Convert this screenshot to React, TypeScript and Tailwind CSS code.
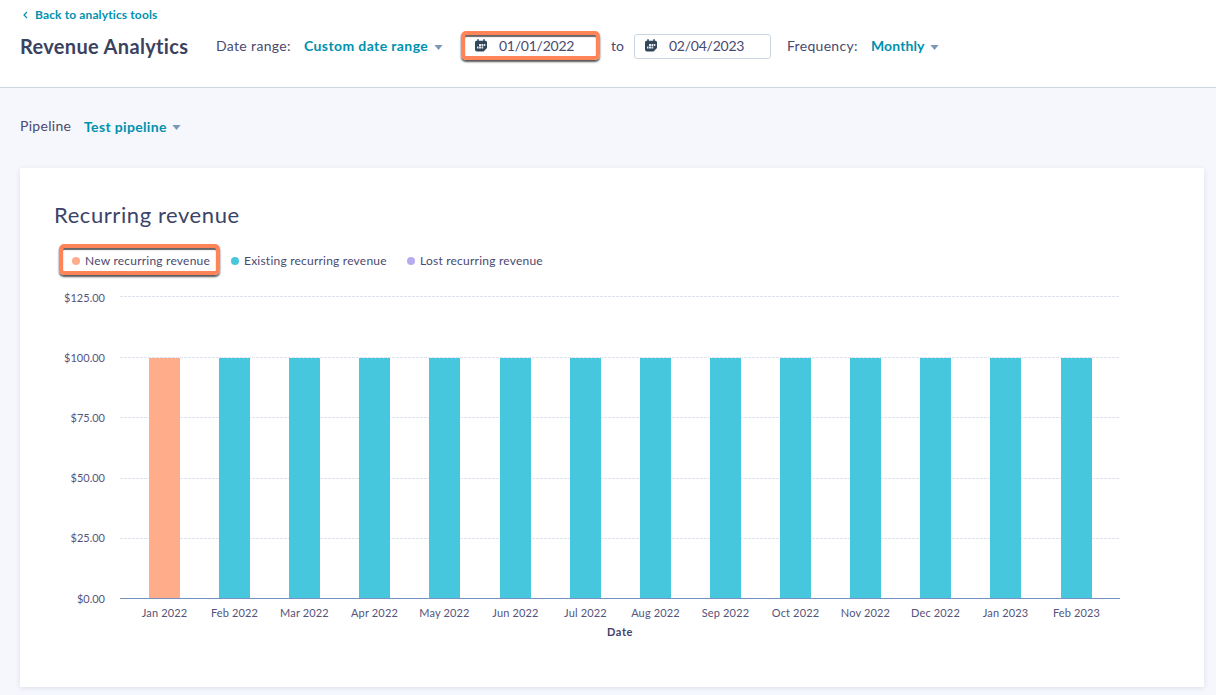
import React from 'react';

const months = [
  'Jan 2022', 'Feb 2022', 'Mar 2022', 'Apr 2022', 'May 2022', 'Jun 2022', 'Jul 2022',
  'Aug 2022', 'Sep 2022', 'Oct 2022', 'Nov 2022', 'Dec 2022', 'Jan 2023', 'Feb 2023',
];

const ticks = [
  { label: '$125.00', y: 6, textY: 11.5 },
  { label: '$100.00', y: 67, textY: 71.8 },
  { label: '$75.00', y: 127, textY: 131.8 },
  { label: '$50.00', y: 188, textY: 192 },
  { label: '$25.00', y: 248, textY: 252 },
  { label: '$0.00', y: 308, textY: 312.8 },
];

const CalendarIcon = () => (
  <svg width="12" height="13" viewBox="0 0 12 13" className="relative -top-px shrink-0">
    <path d="M1.5 1.8h9A1.5 1.5 0 0 1 12 3.3V9l-3.4 3.6H2A2 2 0 0 1 0 10.6V3.3a1.5 1.5 0 0 1 1.5-1.5z" fill="#33475b" />
    <path d="M3 0.3v3M9 0.3v3" stroke="#33475b" strokeWidth="1.6" />
    <path d="M4 5h2v2H4zM6.5 5h1.7v2H6.5zM8.8 5h1.5v2H8.8zM2 7.6h1.5v2H2zM4 7.6h2v2H4zM6.5 7.6h1.7v2H6.5z" fill="#e6ebf2" />
  </svg>
);

const Caret = () => (
  <svg width="9" height="5" viewBox="0 0 9 5" className="relative top-px shrink-0">
    <path d="M0.4 0h8.2L4.5 5z" fill="#7c98b6" />
  </svg>
);

const DateInput = ({ value, className = 'pl-2.5' }: { value: string; className?: string }) => (
  <div className={`flex h-[25px] w-[137px] items-center rounded-[3px] border border-[#cbd6e2] bg-white ${className}`}>
    <CalendarIcon />
    <span className="ml-3 whitespace-nowrap pb-[3px] text-[14px] tracking-[-0.25px]">{value}</span>
  </div>
);

const highlight = 'rounded-[5px] border-4 border-[#ff8559] shadow-[0_2px_2px_#555,inset_0_2px_1px_#666]';

const Chart = () => (
  <svg width="1120" height="350" viewBox="0 0 1120 350" className="block" fill="#55537a" fontSize="11">
    {ticks.map((tick, i) => (
      <g key={tick.label}>
        <text x="85" y={tick.textY} textAnchor="end">{tick.label}</text>
        {i < 5 && (
          <path d={`M100 ${tick.y + 0.5}H1100`} stroke="#dfe3ee" strokeDasharray="3 1" />
        )}
      </g>
    ))}
    {months.map((month, i) => {
      const x = Math.floor(129.45 + i * 70.12);
      return (
        <g key={month}>
          <rect x={x} y="68" width="31" height="240" fill={i === 0 ? '#ffac8b' : '#47c7de'} />
          <text x={x + 15.5} y="327" textAnchor="middle" letterSpacing="0.15">{month}</text>
        </g>
      );
    })}
    <path d="M100 308.5H1100" stroke="#7394c0" />
    <text x="600" y="346" textAnchor="middle" fontWeight="700" letterSpacing="0.6" fill="#42426a">Date</text>
  </svg>
);

const App = () => {
  return (
    <div className="h-[695px] overflow-hidden bg-[#f5f7fc] font-['Lato',sans-serif] text-[#4a4970]">
      <header className="h-[88px] border-b border-[#cbd6e2] bg-white px-5">
        <a className="flex h-[30px] items-center whitespace-nowrap pl-[3px] text-[12px] font-bold tracking-[0.13px] text-[#0091ae]">
          <svg width="5" height="8" viewBox="0 0 5 8" fill="none" className="mr-[7px]">
            <path d="M4 1L1 4l3 3" stroke="#0091ae" strokeWidth="1.2" />
          </svg>
          Back to analytics tools
        </a>
        <div className="flex h-[33px] items-center whitespace-nowrap text-[14px]">
          <h1 className="w-[196px] pb-0.5 text-[20px] font-bold tracking-[0.33px] text-[#3b4260]">Revenue Analytics</h1>
          <span className="w-[88px] pb-0.5 tracking-[0.35px]">Date range:</span>
          <span className="w-[130px] pb-0.5 font-bold tracking-[0.4px] text-[#0091ae]">Custom date range</span>
          <Caret />
          <div className="relative ml-[19px]">
            <DateInput value="01/01/2022" className="pl-3" />
            <div className={`absolute -left-px -top-[3px] h-[29px] w-[139px] ${highlight}`} />
          </div>
          <span className="ml-[12px] w-[23px] pb-0.5 tracking-[0.1px]">to</span>
          <DateInput value="02/04/2023" />
          <span className="ml-4 w-[84px] pb-0.5 tracking-[0.3px]">Frequency:</span>
          <span className="w-[59px] pb-0.5 font-bold tracking-[0.1px] text-[#0091ae]">Monthly</span>
          <Caret />
        </div>
      </header>

      <div className="flex h-[80px] items-center whitespace-nowrap px-5 pb-[3px] text-[14px]">
        <span className="w-[64px] pb-0.5 tracking-[0.3px]">Pipeline</span>
        <span className="w-[88px] font-bold tracking-[0.35px] text-[#0091ae]">Test pipeline</span>
        <Caret />
      </div>

      <main className="ml-5 h-[519px] w-[1184px] bg-white pt-[33px] shadow-[0_1px_5px_rgba(45,62,80,0.12)]">
        <h2 className="pl-[34px] text-[22px] leading-7 tracking-[0.58px] text-[#3b4468]">Recurring revenue</h2>
        <div className="mt-[15px] flex h-[34px] items-center whitespace-nowrap pl-[39px] text-[12px] tracking-[0.22px]">
          <div className={`mb-[3px] flex h-[31px] w-[161px] items-center pl-[9px] pt-[3px] ${highlight}`}>
            <span className="mr-[5px] size-2 rounded-full bg-[#ffac8b]" />
            New recurring revenue
          </div>
          <div className="ml-[11px] flex w-[176px] items-center">
            <span className="mr-[5px] size-2 rounded-full bg-[#47c7de]" />
            Existing recurring revenue
          </div>
          <div className="flex items-center">
            <span className="mr-[5px] size-2 rounded-full bg-[#b8aaf0]" />
            Lost recurring revenue
          </div>
        </div>
        <div className="mt-3">
          <Chart />
        </div>
      </main>
    </div>
  );
};

export default App;
